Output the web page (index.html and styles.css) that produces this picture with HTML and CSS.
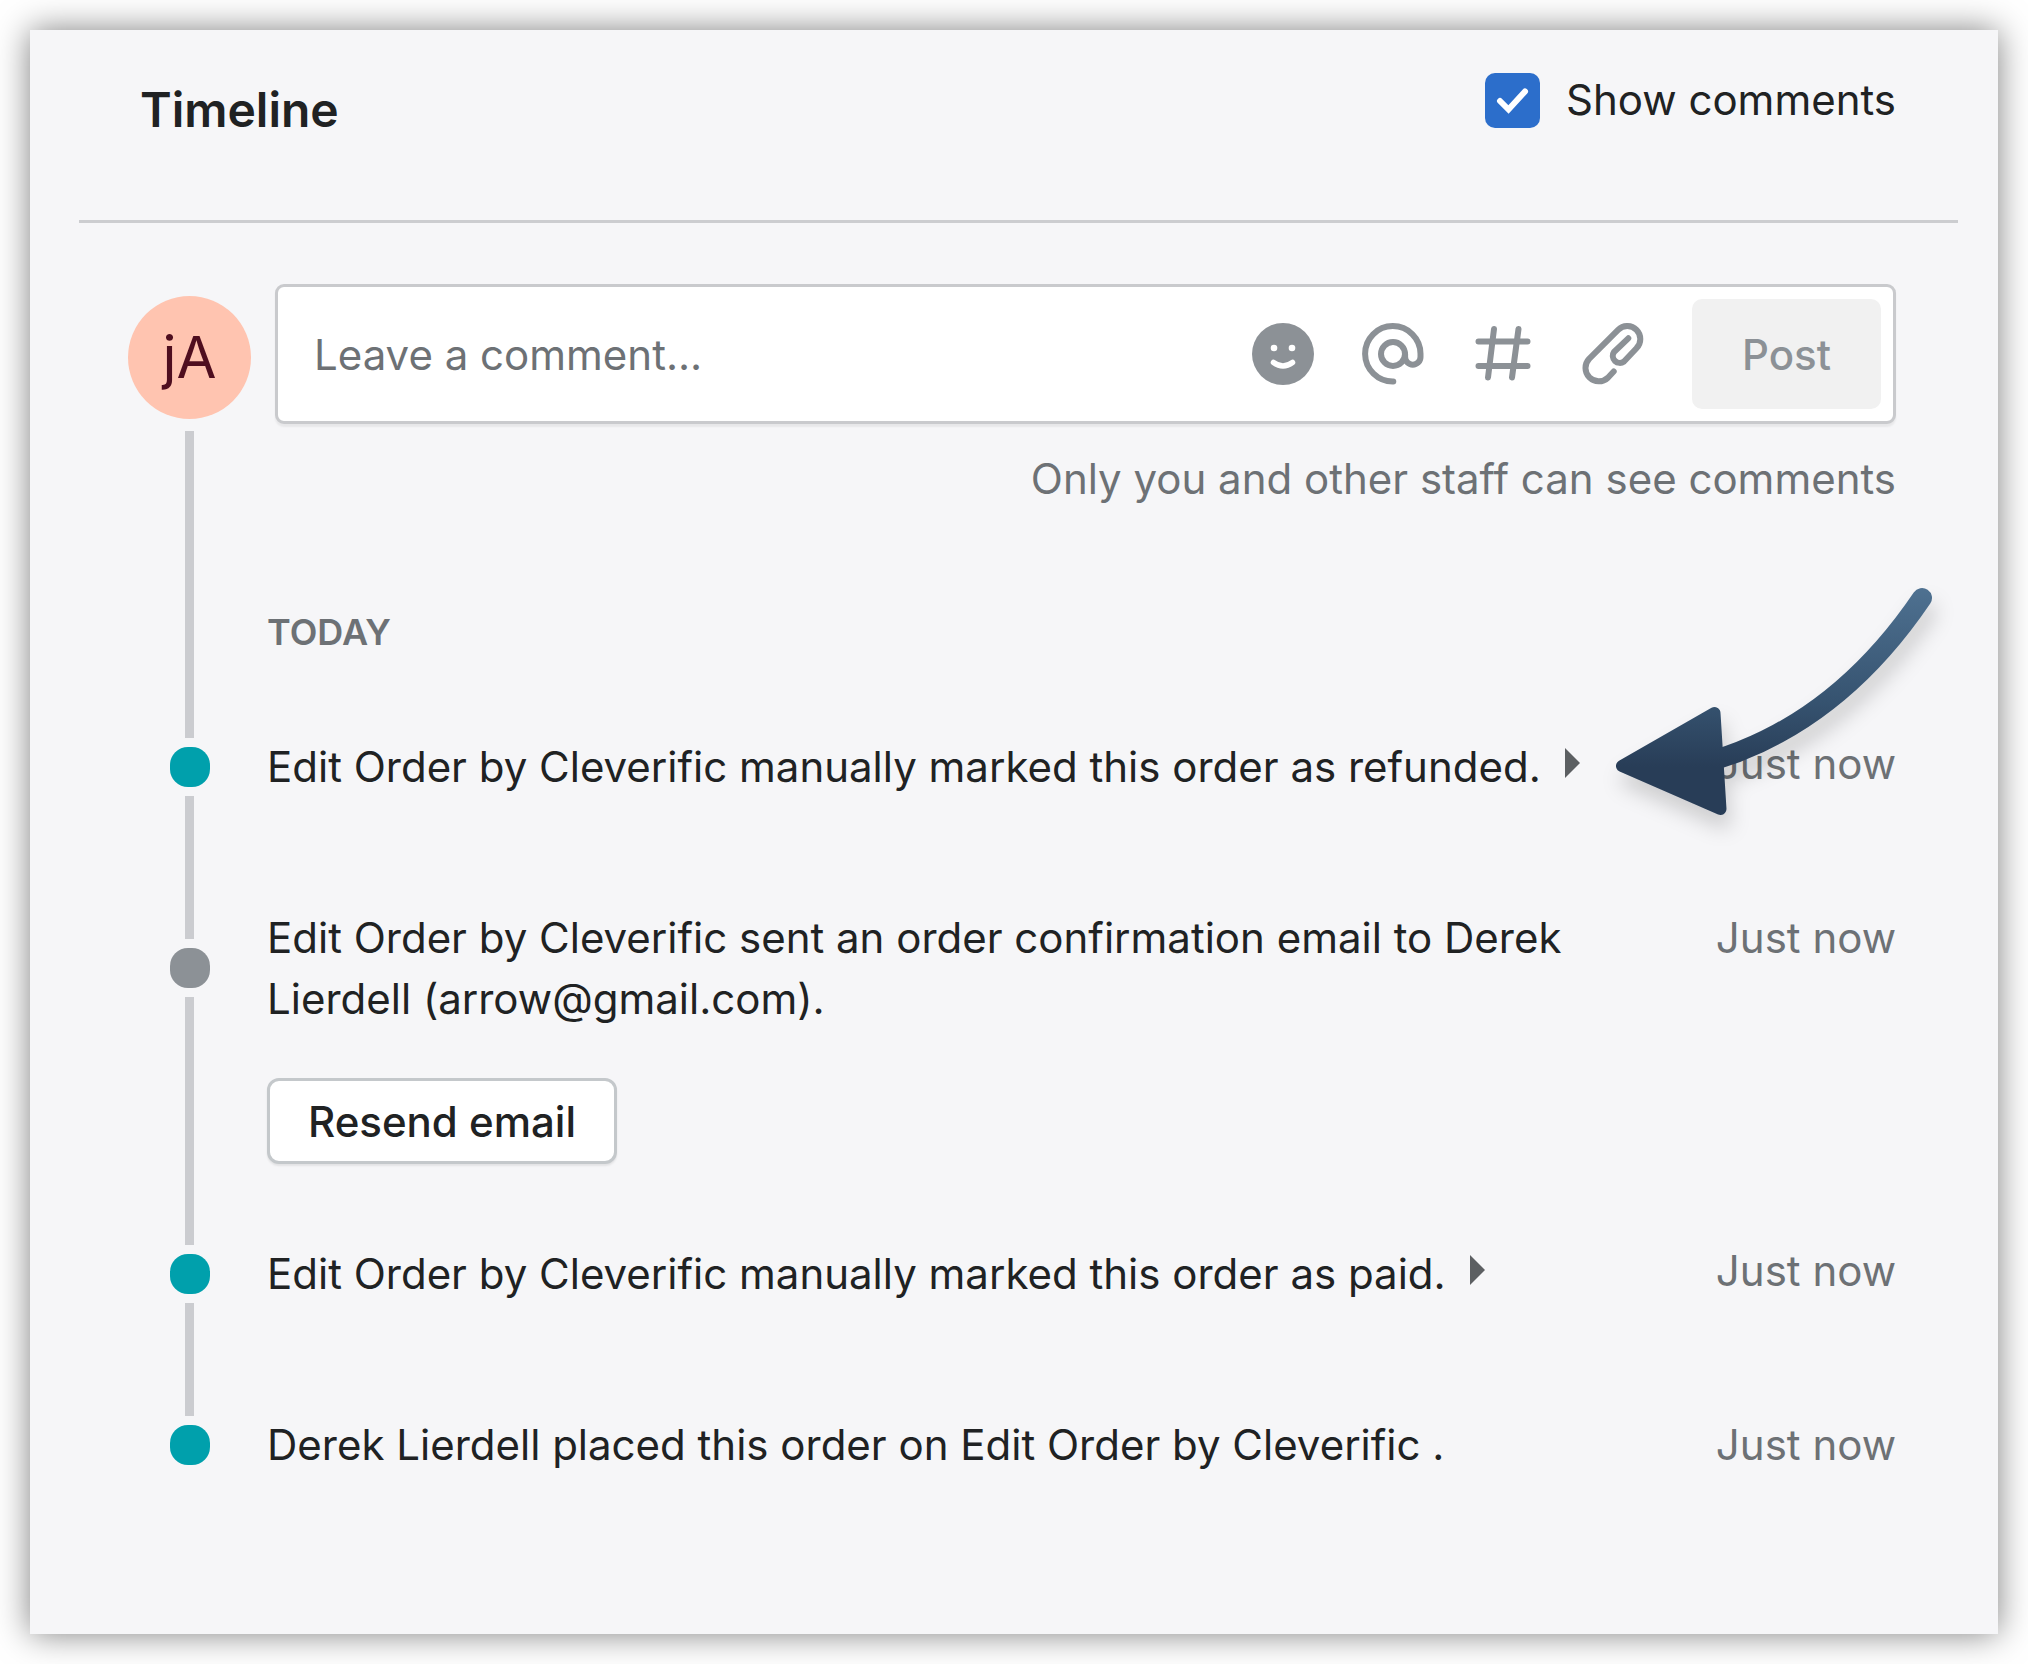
FILE: index.html
```html
<!DOCTYPE html>
<html lang="en">
<head>
<meta charset="utf-8">
<meta name="viewport" content="width=device-width, initial-scale=1">
<title>Timeline</title>
<link rel="stylesheet" href="styles.css">
</head>
<body>
<main class="panel">
  <header class="panel-header">
    <h1 class="title">Timeline</h1>
    <label class="toggle"><input class="toggle-box" type="checkbox" checked><span>Show comments</span></label>
  </header>

  <section class="composer">
    <div class="composer-rail">
      <div class="avatar">jA</div>
      <span class="line"></span>
    </div>
    <form class="composer-main">
      <div class="field">
        <input class="field-input" type="text" aria-label="Leave a comment" placeholder="Leave a comment...">
        <div class="tools">
          <button class="tool" type="button" aria-label="Emoji">
            <svg viewBox="0 0 62 62"><circle cx="31" cy="31" r="31" fill="currentColor"/><circle cx="22" cy="25" r="3.300" fill="#fff"/><circle cx="40" cy="25" r="3.300" fill="#fff"/><path d="M21.500 39.500Q31 46.500 40.500 39.500" fill="none" stroke="#fff" stroke-width="5.500" stroke-linecap="round"/></svg>
          </button>
          <button class="tool" type="button" aria-label="Mention">
            <svg class="stroked" viewBox="0 0 62 62"><circle cx="31" cy="31" r="12"/><path d="M31.300 58.500A27.700 27.700 0 1 1 58.500 31v3a7.700 7.700 0 0 1-15.400 0v-3"/></svg>
          </button>
          <button class="tool" type="button" aria-label="Tag">
            <svg class="stroked" viewBox="0 0 62 62"><path d="M6.500 18.500h49M6.500 43h49M22 6l-6 48.500M46.500 6l-6.500 48.500"/></svg>
          </button>
          <button class="tool" type="button" aria-label="Attach file">
            <svg class="stroked" viewBox="0 0 62 62"><path d="M31.700 48.500L25.900 54.700A13.300 13.300 0 0 1 7.100 35.900L36.100 6.800A13 13 0 0 1 54.500 25.200L42 38.500A7 7 0 0 1 32 29L46.300 15.300"/></svg>
          </button>
        </div>
        <button class="post" type="submit" disabled>Post</button>
      </div>
      <p class="hint">Only you and other staff can see comments</p>
    </form>
  </section>

  <section class="day">
    <span class="line"></span>
    <h2 class="day-title">TODAY</h2>
  </section>

  <ol class="events">
    <li class="event expandable">
      <span class="line lead"></span>
      <span class="marker"><span class="line"></span><span class="dot"></span><span class="line"></span></span>
      <span class="line tail"></span>
      <button class="event-text" type="button" aria-expanded="false">Edit Order by Cleverific manually marked this order as refunded.<svg class="caret" viewBox="0 0 15 30"><path d="M0 0L15 15L0 30Z" fill="currentColor"/></svg></button>
      <time class="event-time">Just now</time>
      <svg class="pointer" viewBox="0 0 340 260" aria-hidden="true">
        <defs><linearGradient id="steel" gradientUnits="userSpaceOnUse" x1="0" y1="20" x2="0" y2="240"><stop offset="0" stop-color="#507393"/><stop offset=".55" stop-color="#365370"/><stop offset=".85" stop-color="#283d57"/></linearGradient></defs>
        <path d="M322 38Q238 162 115 200" fill="none" stroke="url(#steel)" stroke-width="20" stroke-linecap="round"/>
        <path d="M22 206L114.500 153L120.500 249Z" fill="url(#steel)" stroke="url(#steel)" stroke-width="12" stroke-linejoin="round"/>
      </svg>
    </li>
    <li class="event">
      <span class="line lead"></span>
      <span class="marker"><span class="line"></span><span class="dot muted"></span><span class="line"></span></span>
      <span class="line tail"></span>
      <p class="event-text">Edit Order by Cleverific sent an order confirmation email to Derek Lierdell (arrow@gmail.com).</p>
      <time class="event-time">Just now</time>
      <div class="event-actions"><button class="resend" type="button">Resend email</button></div>
    </li>
    <li class="event expandable">
      <span class="line lead"></span>
      <span class="marker"><span class="line"></span><span class="dot"></span><span class="line"></span></span>
      <span class="line tail"></span>
      <button class="event-text" type="button" aria-expanded="false">Edit Order by Cleverific manually marked this order as paid.<svg class="caret" viewBox="0 0 15 30"><path d="M0 0L15 15L0 30Z" fill="currentColor"/></svg></button>
      <time class="event-time">Just now</time>
    </li>
    <li class="event">
      <span class="line lead"></span>
      <span class="marker"><span class="line"></span><span class="dot"></span><span class="line"></span></span>
      <span class="line tail"></span>
      <p class="event-text">Derek Lierdell placed this order on Edit Order by Cleverific .</p>
      <time class="event-time">Just now</time>
    </li>
  </ol>
</main>
</body>
</html>
```
FILE: styles.css
```css
* { box-sizing: border-box; }

body {
  margin: 0;
  padding: 30px;
  background: #fff;
  color: #202223;
  font: 400 42px/61px Inter, "Liberation Sans", sans-serif;
}

h1, h2, p, ol { margin: 0; padding: 0; }
button, input { font: inherit; color: inherit; }

.panel {
  padding-bottom: 128px;
  background: #f6f6f8;
  box-shadow: 0 0 32px rgba(0, 0, 0, .5);
}

.panel-header {
  display: flex;
  justify-content: space-between;
  align-items: flex-start;
  height: 193px;
  margin: 0 40px 0 49px;
  padding: 42px 62px 0 61px;
  border-bottom: 3px solid #cccdd0;
}
.title {
  padding-top: 10px;
  font-size: 48px;
  font-weight: 600;
  line-height: 56px;
}
.toggle {
  display: flex;
  align-items: center;
  gap: 26px;
  line-height: 56px;
}
.toggle-box {
  appearance: none;
  width: 55px;
  height: 55px;
  margin: 0;
  border-radius: 10px;
  background: #2c6ecb url("data:image/svg+xml,%3Csvg xmlns='http://www.w3.org/2000/svg' viewBox='0 0 55 55'%3E%3Cpath d='M15 28l8.500 8.500L40 18.500' fill='none' stroke='%23fff' stroke-width='6' stroke-linecap='round'/%3E%3C/svg%3E");
}

.line {
  width: 9px;
  background: #cbccd0;
  justify-self: center;
}

.composer, .day, .event {
  display: grid;
  grid-template-columns: 125px 1fr;
  column-gap: 15px;
  margin: 0 102px 0 97px;
}
.composer { padding-top: 61px; }
.composer-rail {
  display: flex;
  flex-direction: column;
  align-items: center;
  gap: 12px;
  padding-top: 12px;
}
.composer-rail .line { flex: 1; }
.avatar {
  display: grid;
  place-items: center;
  width: 123px;
  height: 123px;
  border-radius: 50%;
  background: #ffc4b0;
  color: #4f0e1f;
  font-size: 58px;
}
.composer-main { margin-left: 8px; }
.field {
  display: flex;
  align-items: center;
  height: 140px;
  padding: 0 12px 0 36px;
  border: 3px solid #c9cacd;
  border-radius: 9px;
  background: #fff;
  box-shadow: 0 3px 2px rgba(0, 0, 0, .06);
}
.field-input {
  flex: 1;
  min-width: 0;
  padding: 0;
  border: 0;
  outline: 0;
  background: none;
}
.field-input::placeholder { color: #6d7175; opacity: 1; }
.tools {
  display: flex;
  gap: 48px;
  margin-right: 48px;
}
.tool {
  display: block;
  width: 62px;
  height: 62px;
  padding: 0;
  border: 0;
  background: none;
  color: #8c9196;
}
.tool svg { display: block; width: 62px; height: 62px; }
.stroked {
  fill: none;
  stroke: currentColor;
  stroke-width: 6;
  stroke-linecap: round;
  stroke-linejoin: round;
}
.post {
  width: 189px;
  height: 110px;
  padding: 0;
  border: 0;
  border-radius: 10px;
  background: #f1f1f1;
  color: #8c9196;
  font-weight: 500;
}
.hint {
  margin-top: 24px;
  color: #6d7175;
  text-align: right;
}

.day-title {
  padding-top: 98px;
  color: #6d7175;
  font-size: 36px;
  font-weight: 600;
  line-height: 50px;
}

.events { list-style: none; }
.event {
  position: relative;
  grid-template-columns: 125px 1fr auto;
  grid-template-rows: 79px auto auto;
}
.lead { grid-area: 1 / 1; }
.marker {
  display: flex;
  flex-direction: column;
  align-items: center;
  grid-area: 2 / 1;
}
.marker .line { flex: 1; }
.tail { grid-area: 3 / 1; min-height: 31px; }
.event:last-child .tail,
.event:last-child .dot + .line { visibility: hidden; }
.dot {
  width: 40px;
  height: 40px;
  margin: 9px 0;
  border-radius: 18px;
  background: #00a0ac;
}
.dot.muted { background: #8c9196; }
.event-text {
  grid-area: 2 / 2;
  justify-self: start;
  max-width: 1340px;
  padding: 0;
  border: 0;
  background: none;
  text-align: left;
}
.caret {
  width: 15px;
  height: 30px;
  margin-left: 24px;
  color: #5c5f62;
  vertical-align: 4px;
}
.event-time { grid-area: 2 / 3; color: #6d7175; }
.expandable .event-time { margin-top: -3px; }
.event-actions { grid-area: 3 / 2; padding-top: 49px; }
.resend {
  display: block;
  height: 86px;
  padding: 0 38px;
  border: 3px solid #c4c8cb;
  border-radius: 12px;
  background: #fff;
  font-weight: 500;
  box-shadow: 0 2px 2px rgba(0, 0, 0, .08);
}

.pointer {
  position: absolute;
  top: -97px;
  right: -44px;
  width: 340px;
  height: 260px;
  filter: drop-shadow(4px 14px 10px rgba(0, 0, 0, .16));
  pointer-events: none;
}
```
